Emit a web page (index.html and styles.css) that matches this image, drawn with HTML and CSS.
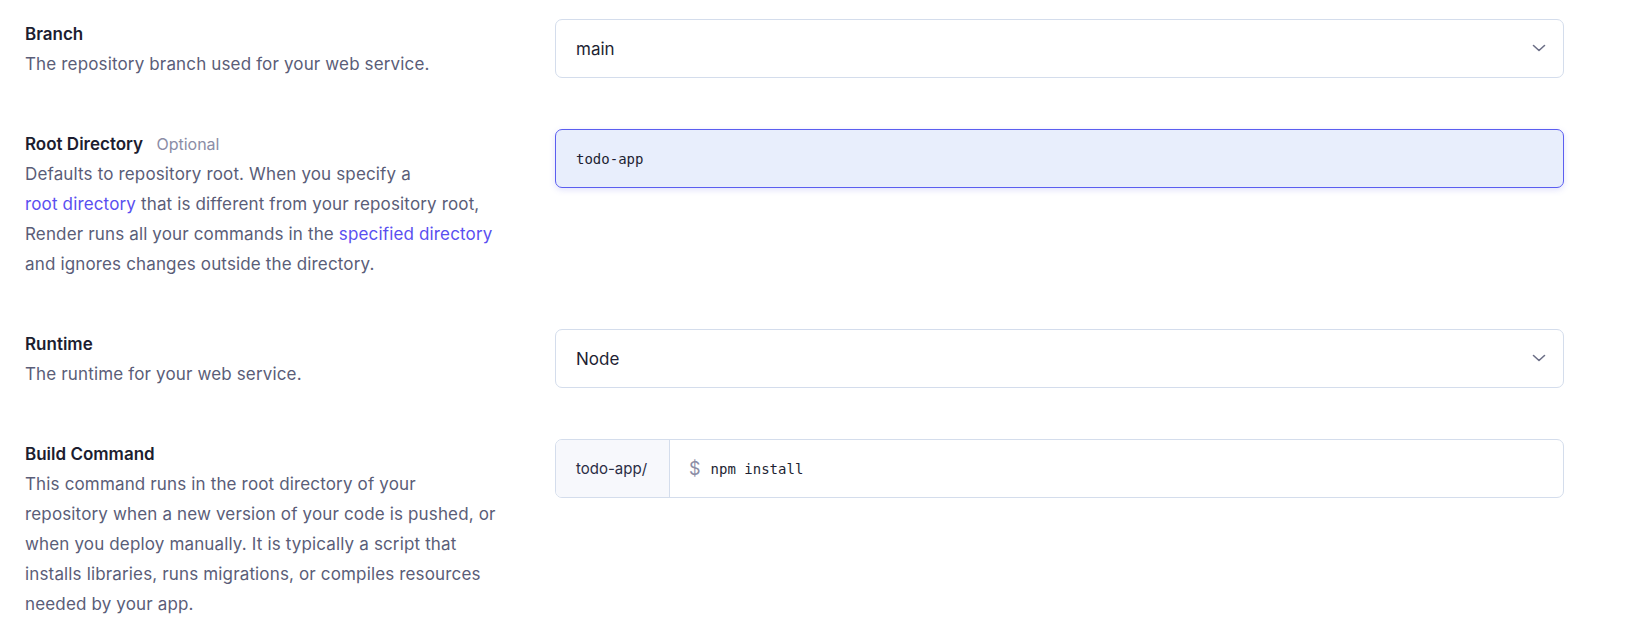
FILE: index.html
```html
<!DOCTYPE html>
<html lang="en">
<head>
<meta charset="utf-8">
<title>Web service settings</title>
<link rel="stylesheet" href="styles.css">
</head>
<body>
<main class="form">
  <section class="field">
    <div class="field-info">
      <h3 class="field-title">Branch</h3>
      <p class="field-desc">The repository branch used for your web service.</p>
    </div>
    <div class="field-control">
      <div class="select">
        <span class="select-value">main</span>
        <svg class="chevron" width="14" height="8" viewBox="0 0 14 8" fill="none"><path d="M1.5 1.5 7 6.5 12.5 1.5" stroke="currentColor" stroke-width="1.6" stroke-linecap="round" stroke-linejoin="round"/></svg>
      </div>
    </div>
  </section>

  <section class="field">
    <div class="field-info">
      <h3 class="field-title">Root Directory <span class="optional">Optional</span></h3>
      <p class="field-desc">Defaults to repository root. When you specify a <a class="link" href="#">root directory</a> that is different from your repository root, Render runs all your commands in the <a class="link" href="#">specified directory</a> and ignores changes outside the directory.</p>
    </div>
    <div class="field-control">
      <div class="input input-focused">
        <span class="mono">todo-app</span>
      </div>
    </div>
  </section>

  <section class="field">
    <div class="field-info">
      <h3 class="field-title">Runtime</h3>
      <p class="field-desc">The runtime for your web service.</p>
    </div>
    <div class="field-control">
      <div class="select">
        <span class="select-value">Node</span>
        <svg class="chevron" width="14" height="8" viewBox="0 0 14 8" fill="none"><path d="M1.5 1.5 7 6.5 12.5 1.5" stroke="currentColor" stroke-width="1.6" stroke-linecap="round" stroke-linejoin="round"/></svg>
      </div>
    </div>
  </section>

  <section class="field">
    <div class="field-info">
      <h3 class="field-title">Build Command</h3>
      <p class="field-desc">This command runs in the root directory of your repository when a new version of your code is pushed, or when you deploy manually. It is typically a script that installs libraries, runs migrations, or compiles resources needed by your app.</p>
    </div>
    <div class="field-control">
      <div class="command">
        <span class="command-prefix">todo-app/</span>
        <div class="command-input">
          <span class="dollar">$</span>
          <span class="mono">npm install</span>
        </div>
      </div>
    </div>
  </section>
</main>
</body>
</html>
```

FILE: styles.css
```css
* { box-sizing: border-box; }

body {
  margin: 0;
  background: #ffffff;
  font-family: Inter, "Noto Sans", "Liberation Sans", sans-serif;
  color: #1f2033;
}

.form {
  display: flex;
  flex-direction: column;
  gap: 50px;
  padding: 19px 62px 0 25px;
}

.field {
  display: grid;
  grid-template-columns: 472px 1fr;
  column-gap: 58px;
  align-items: start;
}

.field-title {
  margin: 0;
  font-size: 17px;
  line-height: 30px;
  font-weight: 600;
  color: #1c1d30;
}

.optional {
  margin-left: 9px;
  font-size: 16px;
  font-weight: 400;
  color: #8b8da6;
}

.field-desc {
  margin: 0;
  font-size: 17px;
  letter-spacing: 0.15px;
  line-height: 30px;
  color: #5a5d78;
}

.link {
  color: #5a4ff0;
  text-decoration: none;
  white-space: nowrap;
}

.select,
.input,
.command {
  height: 59px;
  border: 1px solid #d4ddec;
  border-radius: 7px;
  background: #fff;
}

.select {
  display: flex;
  align-items: center;
  justify-content: space-between;
  padding: 0 17px 0 20px;
}

.select-value {
  font-size: 17px;
  color: #1e1f33;
}

.chevron {
  color: #6b6e86;
  margin-top: -1px;
}

.input {
  display: flex;
  align-items: center;
  padding: 0 20px;
}

.input-focused {
  background: #e8eefc;
  border-color: #5b5ef0;
  box-shadow: 0 2px 6px rgba(91, 94, 240, 0.18);
}

.mono {
  font-family: "DejaVu Sans Mono", "Liberation Mono", monospace;
  font-size: 14px;
  color: #1e1f33;
}

.command {
  display: flex;
  overflow: hidden;
}

.command-prefix {
  display: flex;
  align-items: center;
  padding: 0 22px 0 20px;
  background: #f7f8fc;
  border-right: 1px solid #d4ddec;
  font-size: 15px;
  color: #2b2d45;
}

.command-input {
  display: flex;
  align-items: center;
  gap: 10px;
  padding: 0 19px;
  flex: 1;
}

.dollar {
  font-size: 18px;
  color: #8b8da6;
}
```
